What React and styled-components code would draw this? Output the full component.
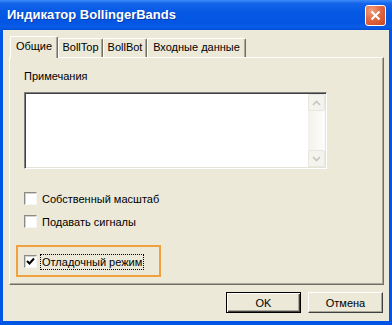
import React from "react";
import styled, { createGlobalStyle } from "styled-components";

const GlobalStyle = createGlobalStyle`
  html, body {
    margin: 0;
    padding: 0;
    background: #fff;
  }
  body {
    font-family: "Liberation Sans", Arial, sans-serif;
    font-size: 11px;
    color: #000;
  }
`;

const Window = styled.div`
  width: 392px;
  height: 325px;
  display: flex;
  flex-direction: column;
  background: #0055e5;
  box-sizing: border-box;
`;

const TitleBar = styled.div`
  height: 30px;
  flex: none;
  display: flex;
  align-items: center;
  justify-content: space-between;
  padding: 0 6px 0 7px;
  box-sizing: border-box;
  background: linear-gradient(
    #3c8af7 0%,
    #1464ea 12%,
    #0559e4 40%,
    #0356e3 75%,
    #0a5ce8 90%,
    #0050d6 100%
  );
`;

const Title = styled.span`
  color: #fff;
  font: bold 13px "Liberation Sans", Arial, sans-serif;
  text-shadow: 1px 1px 0 #0c3aa8;
  margin-top: -1px;
`;

const CloseButton = styled.div`
  width: 21px;
  height: 21px;
  box-sizing: border-box;
  border: 1px solid #fff;
  border-radius: 3px;
  background: radial-gradient(circle at 30% 25%, #f0a080 0%, #e06a44 45%, #c8441c 100%);
  display: flex;
  align-items: center;
  justify-content: center;
`;

const Body = styled.div`
  flex: 1;
  margin: 0 3px 4px;
  background: #ece9d8;
  padding: 6px 5px 0 6px;
  display: flex;
  flex-direction: column;
`;

const TabStrip = styled.div`
  display: flex;
  align-items: flex-end;
  height: 21px;
  padding-left: 1px;
`;

const Tab = styled.div`
  width: ${(p) => p.$w}px;
  height: ${(p) => (p.$active ? 22 : 19)}px;
  margin-bottom: ${(p) => (p.$active ? -1 : 0)}px;
  position: relative;
  z-index: ${(p) => (p.$active ? 1 : 0)};
  box-sizing: border-box;
  background: #ece9d8;
  border-top: 1px solid #fff;
  border-left: 1px solid #fff;
  border-right: 1px solid #716f64;
  box-shadow: inset -1px 0 #aca899;
  border-radius: 2px 2px 0 0;
  display: flex;
  justify-content: center;
  padding-top: ${(p) => (p.$active ? 3 : 2)}px;
  line-height: 13px;
`;

const Panel = styled.div`
  height: 228px;
  flex: none;
  box-sizing: border-box;
  border-top: 1px solid #fff;
  border-left: 1px solid #fff;
  border-right: 1px solid #716f64;
  border-bottom: 1px solid #716f64;
  box-shadow: inset -1px -1px #aca899;
  padding: 12px 14px 0;
  display: flex;
  flex-direction: column;
`;

const Label = styled.div`
  line-height: 13px;
  margin-bottom: 9px;
`;

const NotesBox = styled.div`
  width: 303px;
  height: 77px;
  box-sizing: border-box;
  border-top: 1px solid #808080;
  border-left: 1px solid #808080;
  border-right: 1px solid #fff;
  border-bottom: 1px solid #fff;
  box-shadow: inset 1px 1px #404040, inset -1px -1px #e6e3d6;
  background: #fff;
  display: flex;
  padding: 1px 1px 1px 2px;
`;

const NotesText = styled.div`
  flex: 1;
`;

const ScrollBar = styled.div`
  width: 17px;
  display: flex;
  flex-direction: column;
  justify-content: space-between;
  background: linear-gradient(90deg, #f3f1ec, #fdfdfb);
`;

const ScrollButton = styled.div`
  height: 17px;
  box-sizing: border-box;
  border: 1px solid #e8e6df;
  border-radius: 2px;
  background: #f4f3ee;
  display: flex;
  align-items: center;
  justify-content: center;
`;

const CheckRow = styled.div`
  display: flex;
  align-items: center;
  height: 13px;
  margin-top: ${(p) => p.$top}px;
`;

const CheckBox = styled.div`
  width: 13px;
  height: 13px;
  box-sizing: border-box;
  border-top: 1px solid #8a8a86;
  border-left: 1px solid #8a8a86;
  border-right: 1px solid #f6f6f2;
  border-bottom: 1px solid #f6f6f2;
  box-shadow: inset 1px 1px #d6d3c6;
  background: #fff;
  margin-right: 4px;
  display: flex;
  align-items: center;
  justify-content: center;
`;

const CheckText = styled.span`
  line-height: 13px;
  padding: 1px 1px 0;
  border: 1px dotted ${(p) => (p.$focus ? "#000" : "transparent")};
  margin-left: -1px;
`;

const Highlight = styled.div`
  width: 145px;
  height: 32px;
  box-sizing: border-box;
  border: 2px solid #f0a23e;
  margin: 17px 0 0 -8px;
  padding: 8px 0 0 6px;
`;

const ButtonRow = styled.div`
  display: flex;
  justify-content: flex-end;
  gap: 7px;
  margin-top: 7px;
  padding-right: 1px;
`;

const Button = styled.div`
  width: 75px;
  height: 21px;
  box-sizing: border-box;
  background: #ece9d8;
  display: flex;
  align-items: center;
  justify-content: center;
  border: 1px solid ${(p) => (p.$default ? "#000" : "#fff")};
  border-right-color: ${(p) => (p.$default ? "#000" : "#404040")};
  border-bottom-color: ${(p) => (p.$default ? "#000" : "#404040")};
  box-shadow: ${(p) =>
    p.$default
      ? "inset 1px 1px #fff, inset -1px -1px #404040, inset -2px -2px #aca899"
      : "inset -1px -1px #aca899"};
`;

const Check = () => (
  <svg width="9" height="9" viewBox="0 0 9 9">
    <path d="M1 4 L3.5 6.5 L8 1.5" stroke="#000" strokeWidth="2" fill="none" />
  </svg>
);

const Chevron = ({ up }) => (
  <svg width="9" height="6" viewBox="0 0 9 6">
    <path
      d={up ? "M1 5 L4.5 1.5 L8 5" : "M1 1 L4.5 4.5 L8 1"}
      stroke="#c9c7ba"
      strokeWidth="1.6"
      fill="none"
    />
  </svg>
);

const tabs = [
  { label: "Общие", w: 48, active: true },
  { label: "BollTop", w: 45 },
  { label: "BollBot", w: 44 },
  { label: "Входные данные", w: 99 },
];

export default function App() {
  return (
    <>
      <GlobalStyle />
      <Window>
        <TitleBar>
          <Title>Индикатор BollingerBands</Title>
          <CloseButton>
            <svg width="11" height="11" viewBox="0 0 11 11">
              <path d="M1.5 1.5 L9.5 9.5 M9.5 1.5 L1.5 9.5" stroke="#fff" strokeWidth="2" />
            </svg>
          </CloseButton>
        </TitleBar>
        <Body>
          <TabStrip>
            {tabs.map((t) => (
              <Tab key={t.label} $w={t.w} $active={t.active}>
                {t.label}
              </Tab>
            ))}
          </TabStrip>
          <Panel>
            <Label>Примечания</Label>
            <NotesBox>
              <NotesText />
              <ScrollBar>
                <ScrollButton>
                  <Chevron up />
                </ScrollButton>
                <ScrollButton>
                  <Chevron />
                </ScrollButton>
              </ScrollBar>
            </NotesBox>
            <CheckRow $top={23}>
              <CheckBox />
              <CheckText>Собственный масштаб</CheckText>
            </CheckRow>
            <CheckRow $top={10}>
              <CheckBox />
              <CheckText>Подавать сигналы</CheckText>
            </CheckRow>
            <Highlight>
              <CheckRow $top={0}>
                <CheckBox>
                  <Check />
                </CheckBox>
                <CheckText $focus>Отладочный режим</CheckText>
              </CheckRow>
            </Highlight>
          </Panel>
          <ButtonRow>
            <Button $default>OK</Button>
            <Button>Отмена</Button>
          </ButtonRow>
        </Body>
      </Window>
    </>
  );
}
